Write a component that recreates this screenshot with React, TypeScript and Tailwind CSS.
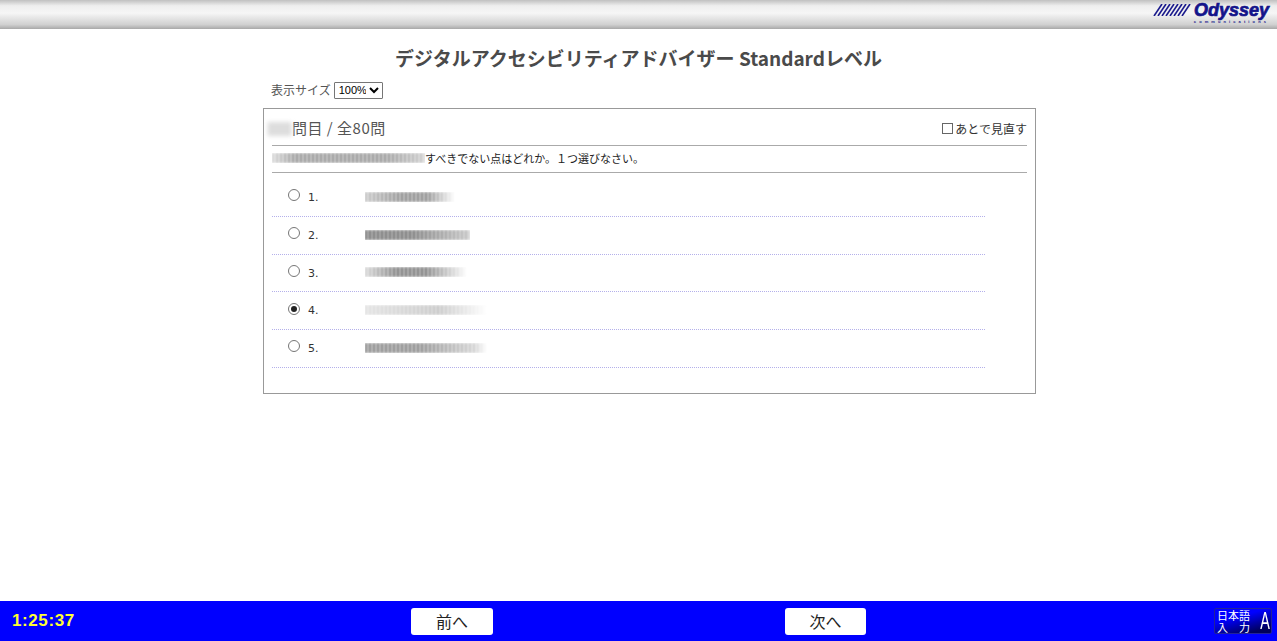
import React from 'react';

const JP = 'font-["Noto_Sans_CJK_JP","Noto_Sans",sans-serif]';

const choices = [
  { no: '1.', width: 'w-[90px]', tone: 'bg-[repeating-linear-gradient(90deg,#777_0_2px,#dcdcdc_2px_4px)] [mask-image:linear-gradient(90deg,#0008,#000_40%,#000_70%,transparent)]' },
  { no: '2.', width: 'w-[105px]', tone: 'bg-[repeating-linear-gradient(90deg,#666_0_2px,#c8c8c8_2px_4px)] [mask-image:linear-gradient(90deg,#000_45%,#0007)]' },
  { no: '3.', width: 'w-[102px]', tone: 'bg-[repeating-linear-gradient(90deg,#666_0_2px,#d4d4d4_2px_4px)] [mask-image:linear-gradient(90deg,#0005,#000_30%,#000_60%,transparent)]' },
  { no: '4.', width: 'w-[122px]', tone: 'bg-[repeating-linear-gradient(90deg,#bbb_0_2px,#e8e8e8_2px_4px)] [mask-image:linear-gradient(90deg,#0008,#000_60%,transparent)]', checked: true },
  { no: '5.', width: 'w-[122px]', tone: 'bg-[repeating-linear-gradient(90deg,#777_0_2px,#d8d8d8_2px_4px)] [mask-image:linear-gradient(90deg,#000_45%,#0006_90%,transparent)]' },
];

function Logo() {
  return (
    <div className="flex flex-col items-end pr-[8px] pt-[2px]">
      <div className="flex items-center gap-[3px] h-[16px]">
        <svg width="38" height="12" viewBox="0 0 38 12" fill="none" stroke="#1a1a8c" strokeWidth="1.6">
          {[0, 1, 2, 3, 4, 5, 6, 7].map((i) => (
            <line key={i} x1={i * 4 + 1} y1="12" x2={i * 4 + 9} y2="0" />
          ))}
        </svg>
        <span className='font-["Liberation_Sans",sans-serif] font-bold italic text-[18px] leading-none text-[#14148a] [-webkit-text-stroke:0.7px_#14148a]'>Odyssey</span>
      </div>
      <span className='mt-[2px] font-["Liberation_Sans",sans-serif] font-bold text-[4px] leading-[4px] tracking-[3.1px] text-[#14148a]'>communications</span>
    </div>
  );
}

export default function App() {
  return (
    <div className={`h-screen flex flex-col bg-white overflow-hidden ${JP}`}>
      <header className="h-[29px] shrink-0 flex justify-end bg-[linear-gradient(#c0c0c0,#eeeeee_20%,#f6f6f6_45%,#d0d0d0_85%,#a8a8a8)]">
        <Logo />
      </header>

      <main className="flex-1 flex flex-col items-center">
        <h1 className="mt-[17px] h-[24px] leading-[24px] text-[19px] font-semibold text-[#4a4a4a]">
          デジタルアクセシビリティアドバイザー Standardレベル
        </h1>

        <div className="w-[773px] mt-[11px] ml-[22px]">
          <div className="flex items-center gap-[3px] h-[18px] pl-[8px] mb-[9px]">
            <span className="text-[12px] text-[#555]">表示サイズ</span>
            <select className='h-[17px] w-[49px] border border-[#767676] rounded-[1px] bg-white text-[11px] leading-none text-black font-["Liberation_Sans",sans-serif]'>
              <option>100%</option>
            </select>
          </div>

          <section className="h-[286px] border border-[#999] px-[8px]">
            <div className="h-[37px] flex items-center justify-between border-b border-[#aaa] pt-[3px]">
              <div className="flex items-center">
                <span className="w-[24px] h-[14px] -ml-[4px] blur-[2px] bg-[repeating-linear-gradient(90deg,#ccc_0_2px,#eee_2px_4px)]" />
                <span className="text-[15px] tracking-[0.5px] text-[#555]">問目 / 全80問</span>
              </div>
              <label className="flex items-center text-[12px] text-[#333]">
                <span className="w-[11px] h-[11px] border border-[#666] mr-[2px]" />
                あとで見直す
              </label>
            </div>

            <div className="h-[27px] flex items-center border-b border-[#aaa] pb-[2px]">
              <span className="w-[153px] h-[10px] blur-[1px] bg-[repeating-linear-gradient(90deg,#888_0_2px,#ddd_2px_4px)] [mask-image:linear-gradient(90deg,#0006,#000_15%,#000_75%,#0008)]" />
              <span className="text-[11px] text-[#222]">すべきでない点はどれか。１つ選びなさい。</span>
            </div>

            <ul className="w-[713px]">
              {choices.map((c) => (
                <li key={c.no} className="h-[37.75px] relative top-[6px] flex items-center border-b border-dotted border-[#b4b0ea] pl-[16px] pb-[3px]">
                  <span className="w-[12px] h-[12px] rounded-full border border-[#767676] flex items-center justify-center mt-[-1px]">
                    {c.checked && <span className="w-[6px] h-[6px] rounded-full bg-[#222]" />}
                  </span>
                  <span className='w-[57px] ml-[8px] pt-[5px] text-[11px] text-[#333] font-["DejaVu_Sans",sans-serif]'>{c.no}</span>
                  <span className={`h-[10px] mt-[2px] blur-[1px] ${c.width} ${c.tone}`} />
                </li>
              ))}
            </ul>
          </section>
        </div>
      </main>

      <footer className="h-[40px] shrink-0 bg-[#0000ff] grid grid-cols-[411px_82px_292px_81px_1fr] items-center">
        <span className='pl-[12px] font-["Liberation_Sans",sans-serif] font-bold text-[17px] tracking-[0.6px] text-[#ffff33]'>1:25:37</span>
        <button className="h-[27px] rounded-[3px] bg-white text-[16px] text-[#222]">前へ</button>
        <span />
        <button className="h-[27px] rounded-[3px] bg-white text-[16px] text-[#222]">次へ</button>
        <div className="flex justify-end pr-[5px]">
          <div className="w-[58px] h-[26px] rounded-[2px] border border-[#222299] bg-[linear-gradient(165deg,#0000ff_35%,#00005c_85%)] flex items-center pl-[2px] text-white">
            <div className="text-[11px] leading-[12px] w-[33px] shrink-0 whitespace-nowrap">
              <div>日本語</div>
              <div className="flex justify-between"><span>入</span><span>力</span></div>
            </div>
            <span className='ml-[7px] text-[24px] leading-none font-["Liberation_Sans",sans-serif] scale-x-[0.6]'>A</span>
          </div>
        </div>
      </footer>
    </div>
  );
}
